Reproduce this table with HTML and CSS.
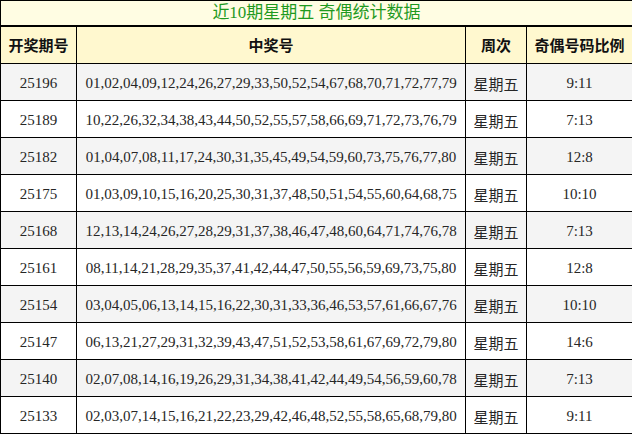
FILE: index.html
```html
<!DOCTYPE html>
<html lang="zh">
<head>
<meta charset="utf-8">
<title>近10期星期五 奇偶统计数据</title>
<link rel="stylesheet" href="styles.css">
</head>
<body>
<table class="stats">
  <colgroup>
    <col class="c-issue">
    <col class="c-nums">
    <col class="c-week">
    <col class="c-ratio">
  </colgroup>
  <thead>
    <tr class="title-row"><th colspan="4" class="title">近10期星期五 奇偶统计数据</th></tr>
    <tr class="head-row">
      <th>开奖期号</th>
      <th>中奖号</th>
      <th>周次</th>
      <th>奇偶号码比例</th>
    </tr>
  </thead>
  <tbody>
    <tr class="alt"><td>25196</td><td>01,02,04,09,12,24,26,27,29,33,50,52,54,67,68,70,71,72,77,79</td><td class="cjk">星期五</td><td>9:11</td></tr>
    <tr><td>25189</td><td>10,22,26,32,34,38,43,44,50,52,55,57,58,66,69,71,72,73,76,79</td><td class="cjk">星期五</td><td>7:13</td></tr>
    <tr class="alt"><td>25182</td><td>01,04,07,08,11,17,24,30,31,35,45,49,54,59,60,73,75,76,77,80</td><td class="cjk">星期五</td><td>12:8</td></tr>
    <tr><td>25175</td><td>01,03,09,10,15,16,20,25,30,31,37,48,50,51,54,55,60,64,68,75</td><td class="cjk">星期五</td><td>10:10</td></tr>
    <tr class="alt"><td>25168</td><td>12,13,14,24,26,27,28,29,31,37,38,46,47,48,60,64,71,74,76,78</td><td class="cjk">星期五</td><td>7:13</td></tr>
    <tr><td>25161</td><td>08,11,14,21,28,29,35,37,41,42,44,47,50,55,56,59,69,73,75,80</td><td class="cjk">星期五</td><td>12:8</td></tr>
    <tr class="alt"><td>25154</td><td>03,04,05,06,13,14,15,16,22,30,31,33,36,46,53,57,61,66,67,76</td><td class="cjk">星期五</td><td>10:10</td></tr>
    <tr><td>25147</td><td>06,13,21,27,29,31,32,39,43,47,51,52,53,58,61,67,69,72,79,80</td><td class="cjk">星期五</td><td>14:6</td></tr>
    <tr class="alt"><td>25140</td><td>02,07,08,14,16,19,26,29,31,34,38,41,42,44,49,54,56,59,60,78</td><td class="cjk">星期五</td><td>7:13</td></tr>
    <tr><td>25133</td><td>02,03,07,14,15,16,21,22,23,29,42,46,48,52,55,58,65,68,79,80</td><td class="cjk">星期五</td><td>9:11</td></tr>
  </tbody>
</table>
</body>
</html>
```

FILE: styles.css
```css
html, body {
  margin: 0;
  padding: 0;
  background: #ffffff;
}

.stats {
  width: 632px;
  border-collapse: collapse;
  table-layout: fixed;
  font-family: "Liberation Serif", "Noto Sans CJK SC", serif;
  font-size: 15px;
  color: #262626;
}

.c-issue { width: 76px; }
.c-nums { width: 389px; }
.c-week { width: 61px; }
.c-ratio { width: 106px; }

.stats th,
.stats td {
  border: 1px solid #000000;
  padding: 0;
  text-align: center;
  vertical-align: middle;
  line-height: 18px;
  white-space: nowrap;
}

.title-row .title {
  height: 24px;
  background: #fffde3;
  color: #1f9a1f;
  font-weight: normal;
  font-size: 17px;
  border-bottom: 2px solid #000000;
  line-height: 24px;
}

.head-row th {
  height: 36px;
  background: #fff8cf;
  font-family: "Noto Sans CJK SC", sans-serif;
  font-weight: bold;
  font-size: 15px;
  color: #111111;
}

.stats tbody td {
  padding-top: 1px;
  height: 35px;
}

.stats tbody tr.alt td {
  background: #f4f4f4;
}

.stats td.cjk {
  font-family: "Noto Sans CJK SC", sans-serif;
  font-size: 15px;
  padding-top: 3px;
  height: 33px;
}
```
